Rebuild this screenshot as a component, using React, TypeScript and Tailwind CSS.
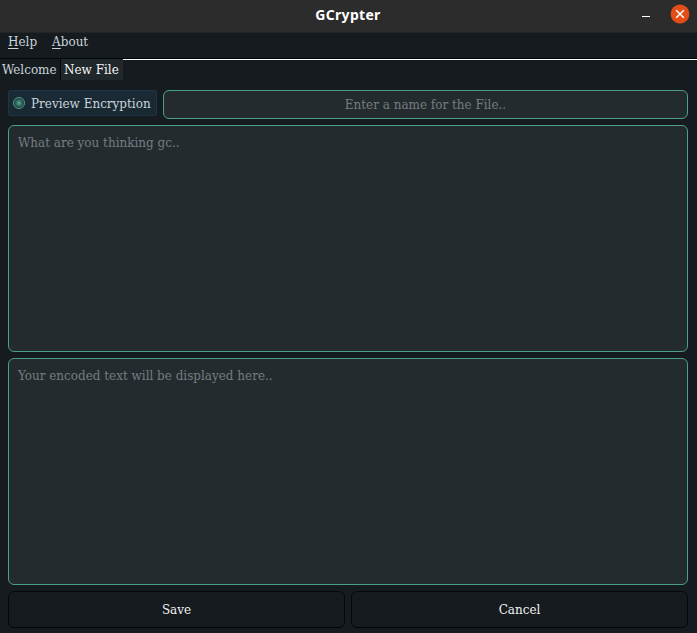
const field =
  "block w-full resize-none rounded-[6px] border border-[#4a9f88] bg-[#242b2e] text-[#c9d3dc] outline-none placeholder:text-[#767c80] placeholder:opacity-100";
const action =
  "h-[37px] flex-1 rounded-[6px] border border-[#05080b] bg-[#161b1f] pt-px text-[#f0f0f0]";

function TitleBar() {
  return (
    <header className="relative flex h-[33px] items-center justify-center border-b border-[#232526] bg-[#2c2c2c] pr-[1px] pb-[3px]">
      <h1 className="font-['Noto_Sans','Open_Sans',sans-serif] text-[14px] leading-5 font-bold tracking-[0.3px] text-white">
        GCrypter
      </h1>
      <div className="absolute top-[4px] right-[7px] flex items-center gap-[20px]">
        <button aria-label="Minimize" className="flex h-5 w-2 items-center pt-[5px]">
          <span className="h-px w-2 bg-white" />
        </button>
        <button aria-label="Close" className="size-5">
          <svg viewBox="0 0 20 20" className="size-5" fill="none" stroke="#fff" strokeWidth="1.5">
            <circle cx="10" cy="10" r="9.4" fill="#e34d18" stroke="none" />
            <path d="M6.2 6.2l7.6 7.6M13.8 6.2l-7.6 7.6" />
          </svg>
        </button>
      </div>
    </header>
  );
}

export default function App() {
  return (
    <div className="flex h-[633px] w-[697px] flex-col overflow-hidden bg-[#161b1f] font-['DejaVu_Serif_Condensed','DejaVu_Serif',serif] text-[13.333px] leading-4 font-stretch-condensed text-[#c9d3dc]">
      <TitleBar />
      <nav className="flex h-[25px] gap-[15px] pt-[1px] pl-2">
        <span><u className="decoration-1 underline-offset-2">H</u>elp</span>
        <span><u className="decoration-1 underline-offset-2">A</u>bout</span>
      </nav>
      <div className="flex h-[22px] border-t border-[#05080b]">
        <div className="w-[61px] border-r border-[#05080b] pt-[3px] pl-[2px] whitespace-nowrap">Welcome</div>
        <div className="w-[62px] bg-[#20282b] pt-[3px] pl-[3px] whitespace-nowrap text-[#f5f5f5]">New File</div>
        <div className="h-px flex-1 bg-white" />
      </div>
      <main className="flex flex-col gap-[6px] px-2 pt-[10px] pr-[9px]">
        <div className="flex items-start gap-[6px]">
          <label className="flex h-[26px] w-[149px] items-center rounded-[2px] border border-[#1b344a] bg-linear-to-b from-[#1b2b36] to-[#192932] pl-[4px] whitespace-nowrap">
            <span className="mr-[6px] size-3 rounded-full border border-[#4a9f88] bg-radial from-[#4a9f88] from-10% to-[#203237] to-75%" />
            <span className="pt-[2px]">Preview Encryption</span>
          </label>
          <input className={`${field} h-[29px] min-w-0 flex-1 text-center`} placeholder="Enter a name for the File.." />
        </div>
        <textarea className={`${field} h-[227px] px-[9px] pt-[9px]`} placeholder="What are you thinking gc.." />
        <textarea className={`${field} h-[227px] px-[9px] pt-[9px]`} placeholder="Your encoded text will be displayed here.." />
        <div className="flex gap-[6px]">
          <button className={action}>Save</button>
          <button className={action}>Cancel</button>
        </div>
      </main>
    </div>
  );
}
